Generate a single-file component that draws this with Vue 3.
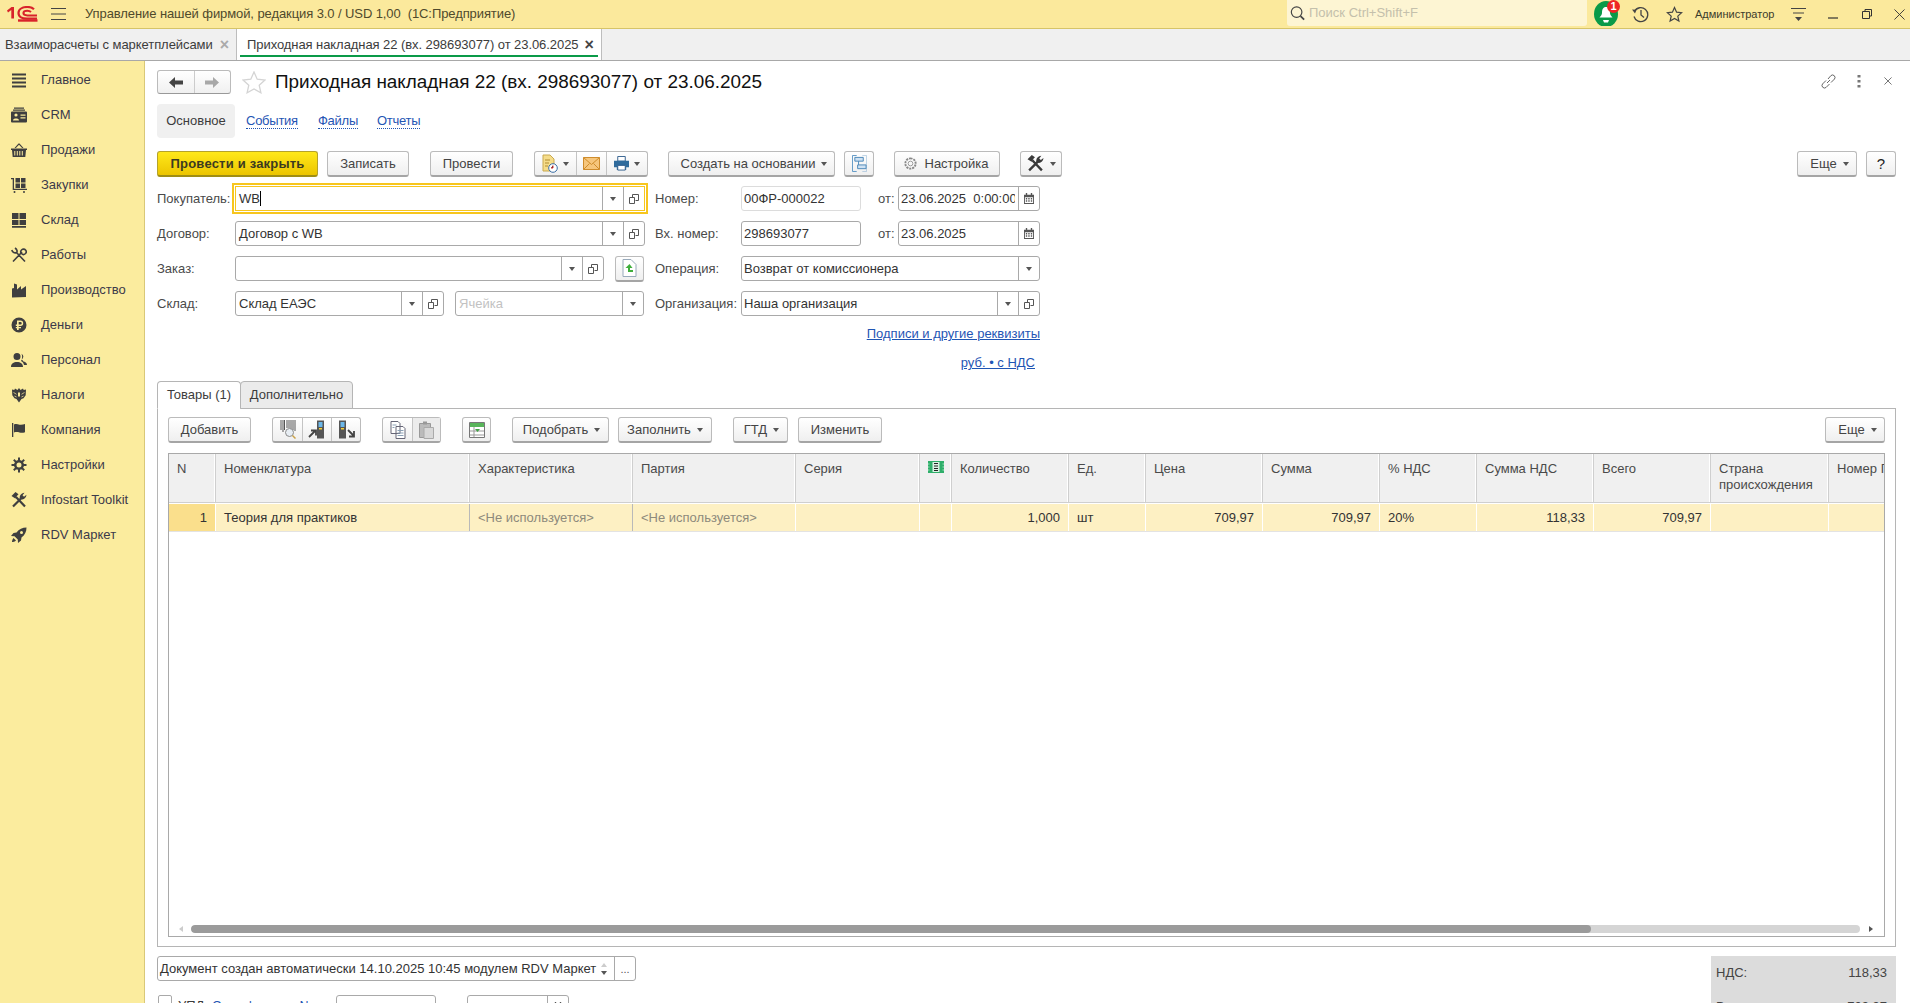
<script setup>
const nav = [
  { t: 'Главное', d: 'M1 1.5h14v2H1zM1 5.5h14v2H1zM1 9.5h14v2H1zM1 13.5h14v2H1z' },
  { t: 'CRM', d: 'M3 .5h10v1.2H3zM2 2.5h12v1.2H2zM1 4.5h14a1 1 0 011 1v9a1 1 0 01-1 1H1a1 1 0 01-1-1v-9a1 1 0 011-1zM3.4 8a1.6 1.6 0 103.2 0 1.6 1.6 0 10-3.2 0zM2 13.5h6c0-2.6-6-2.6-6 0zM9.5 7.500h5v1.200h-5zM9.500 10.300h5v1.200h-5z' },
  { t: 'Продажи', d: 'M3.500 6L7.500 1.500h1L12.500 6h-1.400L8 2.700 4.900 6zM0 6.500h16V8h-1l-.7 7H1.700L1 8H0zM3.300 9v4.500h1V9zM5.800 9v4.500h1V9zM8.300 9v4.500h1V9zM10.800 9v4.500h1V9z' },
  { t: 'Закупки', d: 'M0 1h3v10.700h13V13H1.700V2.300H0zM4.500 1h4.500v4.500H4.500zM10 1h4.500v4.500H10zM4.500 6.500h4.500V11H4.500zM10 6.500h4.500V11H10zM2.500 15a1 1 0 102 0 1 1 0 10-2 0zM12 15a1 1 0 102 0 1 1 0 10-2 0z' },
  { t: 'Склад', d: 'M1 1h6.500v6H1zM8.500 1H15v6H8.500zM1 8h6.500v5H1zM8.500 8H15v5H8.500zM1 14h14v1.700H1z' },
  { t: 'Работы', s: 'M5.500 5.500l8.500 9M11 5L2 14.500M.8 3c.6 2.500 3 3.500 4.700 2.500 1.200-1 .6-3-1.500-4.500M10.500 6.500a2.300 2.300 0 104-3.500 2.300 2.300 0 10-4 3.500', w: 1.6 },
  { t: 'Производство', d: 'M1 15.500V6.500l2-.5V1.500l3 1v5l4-3.500v3.500l5-3.500v11z' },
  { t: 'Деньги', d: 'M.500 8a7.500 7.500 0 1015 0 7.500 7.500 0 10-15 0zM6 3.500h3.500a2.700 2.700 0 010 5.400H7.700v1H10v1.300H7.700v1.800H6v-1.800H4.800V9.900H6v-1H4.800V7.600H6zM7.700 4.900v2.700h1.700a1.350 1.350 0 000-2.700z' },
  { t: 'Персонал', d: 'M2.500 4.500a3.500 3.500 0 107 0 3.500 3.500 0 10-7 0zM0 15c0-3.500 2.500-5 6-5s6 1.500 6 5zM10.500 1.700a3.200 3.200 0 010 5.800c2 .8 1 1.500 1.500 1.800 2 .5 4 1.500 4 3.700h-3c-.3-1.800-1.500-3.200-3-4 1.200-2 1.600-5 .5-7.300z' },
  { t: 'Налоги', d: 'M8 1l1.500 2L12 1.500l.7 1.500 2.300-.5-.3 5.700-2.200 3-2 .8L8 15.500 5.500 12l-2-.8-2.200-3L1 2.500l2.300.5.700-1.500L6.500 3zM7 5.500v4h2v-4zM2.500 5v.8l3 2v-.8zM13.500 5v.8l-3 2v-.8zM3.500 8.500v.8l2 1.200v-.8zM12.500 8.500v.8l-2 1.200v-.8z' },
  { t: 'Компания', d: 'M1 1h1.300v14H1zM3 2.500c2-1 3.800-.2 5.500.2 2 .4 3.800-.1 5.500-.6v8.200c-2 .6-3.800.7-5.500.2-1.800-.5-3.500-.7-5.500 0z' },
  { t: 'Настройки', d: 'M8 3a5 5 0 110 10 5 5 0 010-10zM8 5.500a2.500 2.500 0 100 5 2.500 2.500 0 000-5zM7 .500h2v3H7zM7 12.500h2v3H7zM.500 7h3v2h-3zM12.500 7h3v2h-3zM2.100 3.500l1.400-1.400 2.100 2.100-1.400 1.400zM12.500 2.100l1.400 1.400-2.100 2.100-1.400-1.400zM13.900 12.500l-1.400 1.400-2.100-2.100 1.400-1.400zM3.500 13.900l-1.400-1.400 2.100-2.100 1.400 1.400z' },
  { t: 'Infostart Toolkit', d: 'M.5 4L4.500 0l3 2.200-1.200 1.200-2 3zM9 6.800C8 4.500 9.800 1 13.500.800l-2 2.500L13 4.800l2.500-2c-.2 3-2.800 5.200-5 4.500z', s: 'M2 14.500L10.500 6M14 14.500L5 5', w: 2.2 },
  { t: 'RDV Маркет', d: 'M15.500.500c-4 0-7.500 1.500-10 5l-3 .5L0 9l3.500.200 3.300 3.300.2 3.500 3-2.500.5-3c3.500-2.500 5-6 5-10zM9 5.500a1.500 1.500 0 103 0 1.500 1.500 0 10-3 0zM2.500 11c-1 1-1.500 3-1.500 4 1 0 3-.5 4-1.500z' }
]

const cols = [
  { t: 'N', w: 47 }, { t: 'Номенклатура', w: 254 }, { t: 'Характеристика', w: 163 },
  { t: 'Партия', w: 163 }, { t: 'Серия', w: 124 }, { t: '', w: 32, stamp: true },
  { t: 'Количество', w: 117 }, { t: 'Ед.', w: 77 }, { t: 'Цена', w: 117 },
  { t: 'Сумма', w: 117 }, { t: '% НДС', w: 97 }, { t: 'Сумма НДС', w: 117 },
  { t: 'Всего', w: 117 }, { t: 'Страна происхождения', w: 118, narrow: true }, { t: 'Номер ГТД', w: 90 }
]
const gridCols = cols.map(c => c.w + 'px').join(' ')
const row = [
  { t: '1', r: true, n: true }, { t: 'Теория для практиков', sep: true }, { t: '<Не используется>', g: true, sep: true },
  { t: '<Не используется>', g: true }, { t: '' }, { t: '' },
  { t: '1,000', r: true }, { t: 'шт' }, { t: '709,97', r: true },
  { t: '709,97', r: true }, { t: '20%' }, { t: '118,33', r: true },
  { t: '709,97', r: true }, { t: '' }, { t: '' }
]
</script>

<template>
  <div class="app">
    <svg class="sprite" width="0" height="0">
      <symbol id="i-open" viewBox="0 0 10 10">
        <path d="M3.500 3.500V.5h6v6h-3M.5 3.500h5v6h-5z" fill="none" stroke="#555" stroke-width="1" />
      </symbol>
      <symbol id="i-cal" viewBox="0 0 11 12">
        <path d="M0 2h2V0h1.500v2h4V0H9v2h2v10H0zM1 4.500V11h9V4.500z" fill="#555" fill-rule="evenodd" />
        <path d="M2 5.500h1.500V7H2zM4.700 5.500h1.500V7H4.700zM7.500 5.500H9V7H7.500zM2 8h1.500v1.500H2zM4.700 8h1.500v1.500H4.700zM7.500 8H9v1.500H7.500z" fill="#555" />
      </symbol>
      <symbol id="i-tools" viewBox="0 0 16 16">
        <path d="M.5 4L4.500 0l3 2.200-1.200 1.200-2 3zM9 6.800C8 4.500 9.800 1 13.500.8l-2 2.500L13 4.800l2.500-2c-.2 3-2.800 5.200-5 4.500z" fill="#3a3a3a" />
        <path d="M2 14.500L10.500 6M14 14.500L5 5" fill="none" stroke="#3a3a3a" stroke-width="2.200" />
      </symbol>
    </svg>

    <header class="topbar">
      <svg class="logo" width="31" height="16" viewBox="0 0 31 16">
        <path d="M0 4.500L4.500 1H7v11.500H4.300V4L1 6.500z" fill="#d8232a" />
        <path d="M27 3.200C25.500 1.800 23 1 20.500 1c-5 0-9 2.200-9 6s3.800 5.700 8.500 5.700H30" fill="none" stroke="#d8232a" stroke-width="2.200" />
        <path d="M24 6c-1-.9-2.300-1.300-3.600-1.300-2.200 0-4 .9-4 2.400s1.800 2.300 4 2.300H30" fill="none" stroke="#d8232a" stroke-width="2" />
        <path d="M11 14.500h19.500" stroke="#d8232a" stroke-width="2.400" />
      </svg>
      <svg class="burger" width="15" height="12" viewBox="0 0 15 12"><path d="M0 .5h15M0 6h15M0 11.500h15" stroke="#444" /></svg>
      <span class="apptitle">Управление нашей фирмой, редакция 3.0 / USD 1,00&nbsp; (1С:Предприятие)</span>
      <div class="search">
        <svg width="15" height="16" viewBox="0 0 17 17"><circle cx="7.500" cy="7.500" r="6" fill="none" stroke="#444" stroke-width="1.300" /><path d="M12 12l4 4" stroke="#444" stroke-width="2" /></svg>
        <span>Поиск Ctrl+Shift+F</span>
      </div>
      <div class="bell">
        <svg width="24" height="25" viewBox="0 0 24 25">
          <ellipse cx="12" cy="13" rx="12" ry="13" fill="#0a9a48" />
          <path d="M12 6c3 0 4 2.500 4 6 0 2 1.500 3 2.500 4.500h-13C6.500 15 8 14 8 12c0-3.500 1-6 4-6z" fill="#fff" />
          <path d="M9 19h6l-1 2.500h-4z" fill="#fff" />
        </svg>
        <span class="badge">1</span>
      </div>
      <svg class="hist" width="17" height="17" viewBox="0 0 17 17">
        <path d="M2.500 5.500A7 7 0 112 10.500" fill="none" stroke="#444" stroke-width="1.300" />
        <path d="M0 3.500l4.500.2L3 7.500z" fill="#444" />
        <path d="M9 4v5l3 2.500" fill="none" stroke="#444" stroke-width="1.300" />
      </svg>
      <svg class="star-top" width="17" height="17" viewBox="0 0 17 17"><path d="M8.500 1.500l2.100 4.700 5 .5-3.800 3.400 1.100 5-4.400-2.600-4.400 2.600 1.100-5L1.400 6.700l5-.5z" fill="none" stroke="#444" stroke-width="1.200" /></svg>
      <span class="user">Администратор</span>
      <svg class="menu-i" width="15" height="15" viewBox="0 0 15 15"><path d="M0 1.500h15M2 6h11" stroke="#444" /><path d="M4 10h7l-3.500 4z" fill="#444" /></svg>
      <svg class="win-min" width="10" height="10" viewBox="0 0 10 10"><path d="M0 9h10" stroke="#333" stroke-width="1.200" /></svg>
      <svg class="win-res" width="10" height="10" viewBox="0 0 10 10"><path d="M3 2V.5h6.500V7H8M.5 2.500h7v7h-7z" fill="none" stroke="#333" /></svg>
      <svg class="win-cls" width="11" height="11" viewBox="0 0 12 12"><path d="M.5.500l11 11M11.500.500l-11 11" stroke="#333" /></svg>
    </header>

    <nav class="tabbar">
      <div class="wtab"><span>Взаиморасчеты с маркетплейсами</span><i class="x x-g">×</i></div>
      <div class="wtab active"><span>Приходная накладная 22 (вх. 298693077) от 23.06.2025</span><i class="x">×</i></div>
    </nav>

    <div class="main">
      <aside class="side">
        <a v-for="n in nav" :key="n.t" class="side-item">
          <svg width="16" height="16" viewBox="0 0 16 16">
            <path v-if="n.d" :d="n.d" fill="#3f3f3f" :fill-rule="n.t === 'Настройки' || n.t === 'Infostart Toolkit' ? 'nonzero' : 'evenodd'" />
            <path v-if="n.s" :d="n.s" fill="none" stroke="#3f3f3f" :stroke-width="n.w" />
          </svg>
          <span>{{ n.t }}</span>
        </a>
      </aside>

      <section class="content">
        <div class="head">
          <div class="navbtns">
            <button class="nb"><svg width="14" height="11" viewBox="0 0 14 11"><path d="M0 5.500L6 0v3.500h8v4H6V11z" fill="#444" /></svg></button>
            <button class="nb"><svg width="14" height="11" viewBox="0 0 14 11"><path d="M14 5.500L8 0v3.500H0v4h8V11z" fill="#a8a8a8" /></svg></button>
          </div>
          <svg class="fav" width="24" height="23" viewBox="0 0 24 23"><path d="M12 1l3.200 7.200 7.800.8-5.800 5.200 1.700 7.600L12 18l-6.900 3.800 1.700-7.600L1 9l7.800-.8z" fill="none" stroke="#d4d4d4" stroke-width="1.300" /></svg>
          <h1 class="title">Приходная накладная 22 (вх. 298693077) от 23.06.2025</h1>
          <div class="head-tools">
            <svg width="17" height="17" viewBox="0 0 17 17"><path d="M7 10l3-3M6 7.500l-3.500 3.500a2.500 2.500 0 003.500 3.500L9.500 11M8 6l3-3.500A2.500 2.500 0 0114.500 6L11 9.500" fill="none" stroke="#666" stroke-width="1" /></svg>
            <svg class="dots3" width="4" height="15" viewBox="0 0 4 15"><path d="M.5 1h3v2.500h-3zM.5 6h3v2.500h-3zM.5 11h3v2.500h-3z" fill="#777" /></svg>
            <svg class="hclose" width="8" height="8" viewBox="0 0 9 9"><path d="M.5.500l8 8M8.500.500l-8 8" stroke="#666" /></svg>
          </div>
        </div>

        <div class="subnav">
          <span class="sn-on">Основное</span>
          <a class="sn">События</a>
          <a class="sn sn2">Файлы</a>
          <a class="sn sn3">Отчеты</a>
        </div>

        <div class="toolbar">
          <button class="btn primary w161">Провести и закрыть</button>
          <button class="btn w82 g9">Записать</button>
          <button class="btn w83 g21">Провести</button>
          <div class="grp g21">
            <button class="seg w41">
              <svg width="16" height="19" viewBox="0 0 16 19"><path d="M1 1h7l4 4v12H1z" fill="#f5dc8a" stroke="#c9a94e" /><path d="M3 6h5M3 9h4M3 12h3" stroke="#b08c30" /><circle cx="11" cy="14" r="4.300" fill="#fff" stroke="#3a6ea5" /><path d="M11 11.500V14h-2" stroke="#d33" /></svg>
              <b class="tri"></b>
            </button>
            <button class="seg w30">
              <svg width="17" height="13" viewBox="0 0 17 13"><path d="M.5.500h16v12H.5z" fill="#f6c67c" stroke="#cf8c2c" /><path d="M.5.500l8 7 8-7M.5 12.500l6-6M16.500 12.500l-6-6" fill="none" stroke="#cf8c2c" /></svg>
            </button>
            <button class="seg w41">
              <svg width="15" height="15" viewBox="0 0 16 16"><path d="M4 .5h8v5H4z" fill="#fff" stroke="#2f5d8c" /><path d="M0 5h16v7h-3v3H3v-3H0z" fill="#2f6b9c" /><path d="M4 10h8v5H4z" fill="#fff" stroke="#2f5d8c" /></svg>
              <b class="tri"></b>
            </button>
          </div>
          <button class="btn w167 g20 pad4">Создать на основании <b class="tri tl"></b></button>
          <button class="btn w30 g9 icon">
            <svg width="15" height="17" viewBox="0 0 16 18"><path d="M5 .5H.5v17H5" fill="none" stroke="#5a94c4" /><path d="M11 .5h4.500v17H11" fill="none" stroke="#5a94c4" opacity=".4" /><path d="M3 2.500h9v4H3zM6 10.500h9v4H6z" fill="#cfe2f3" stroke="#4a86b8" /><path d="M7 6.500v4" stroke="#4a86b8" /></svg>
          </button>
          <button class="btn w106 g20 padr3">
            <svg width="15" height="15" viewBox="0 0 16 16"><path d="M8 2.500a5.500 5.500 0 110 11 5.500 5.500 0 010-11z" fill="none" stroke="#888" stroke-width="2" stroke-dasharray="2.200 1" /><circle cx="8" cy="8" r="2.500" fill="none" stroke="#999" /></svg>
            <span class="setlbl">Настройка</span>
          </button>
          <button class="btn w42 g20">
            <svg width="17" height="17"><use href="#i-tools" /></svg>
            <b class="tri tl"></b>
          </button>
          <button class="btn w60 auto pad4">Еще <b class="tri tl"></b></button>
          <button class="btn w30 g9 qm">?</button>
        </div>

        <div class="form">
          <div class="col-l">
            <div class="frow">
              <label class="lbl-l">Покупатель:</label>
              <div class="fld focus w410"><span class="val">WB<i class="caret"></i></span><span class="fb"><b class="tri"></b></span><span class="fb"><svg width="10" height="10"><use href="#i-open" /></svg></span></div>
            </div>
            <div class="frow">
              <label class="lbl-l">Договор:</label>
              <div class="fld w410"><span class="val">Договор с WB</span><span class="fb"><b class="tri"></b></span><span class="fb"><svg width="10" height="10"><use href="#i-open" /></svg></span></div>
            </div>
            <div class="frow">
              <label class="lbl-l">Заказ:</label>
              <div class="fld w369"><span class="val"></span><span class="fb"><b class="tri"></b></span><span class="fb"><svg width="10" height="10"><use href="#i-open" /></svg></span></div>
              <button class="btn w29 small-icon">
                <svg width="15" height="18" viewBox="0 0 15 18"><path d="M1 .5h8l5 5v12H1z" fill="#fff" stroke="#9ab" /><path d="M7.500 5L3.500 9h2.500v4h5V11H8V9h2.500z" fill="#3fae3c" /></svg>
              </button>
            </div>
            <div class="frow">
              <label class="lbl-l">Склад:</label>
              <div class="fld w209"><span class="val">Склад ЕАЭС</span><span class="fb"><b class="tri"></b></span><span class="fb"><svg width="10" height="10"><use href="#i-open" /></svg></span></div>
              <div class="fld w189"><span class="val ph">Ячейка</span><span class="fb"><b class="tri"></b></span></div>
            </div>
          </div>

          <div class="col-r">
            <div class="frow">
              <label class="lbl-r">Номер:</label>
              <div class="fld w120 ro"><span class="val">00ФР-000022</span></div>
              <label class="lbl-ot">от:</label>
              <div class="fld w142"><span class="val clip">23.06.2025&nbsp; 0:00:00</span><span class="fb"><svg width="10" height="11"><use href="#i-cal" /></svg></span></div>
            </div>
            <div class="frow">
              <label class="lbl-r">Вх. номер:</label>
              <div class="fld w120"><span class="val">298693077</span></div>
              <label class="lbl-ot">от:</label>
              <div class="fld w142"><span class="val">23.06.2025</span><span class="fb"><svg width="10" height="11"><use href="#i-cal" /></svg></span></div>
            </div>
            <div class="frow">
              <label class="lbl-r">Операция:</label>
              <div class="fld w299"><span class="val">Возврат от комиссионера</span><span class="fb"><b class="tri"></b></span></div>
            </div>
            <div class="frow">
              <label class="lbl-r">Организация:</label>
              <div class="fld w299"><span class="val">Наша организация</span><span class="fb"><b class="tri"></b></span><span class="fb"><svg width="10" height="10"><use href="#i-open" /></svg></span></div>
            </div>
            <a class="hl hl1">Подписи и другие реквизиты</a>
            <a class="hl hl2">руб. • с НДС</a>
          </div>
        </div>

        <div class="ptabs">
          <span class="ptab on">Товары (1)</span>
          <span class="ptab">Дополнительно</span>
        </div>
        <div class="panel">
          <div class="toolbar t2">
            <button class="btn w83">Добавить</button>
            <div class="grp g21">
              <button class="seg w29">
                <svg width="16" height="19" viewBox="0 0 16 19"><path d="M1 0v10M3 0v12M4.500 0v10M7 0v8M9 0v8M11 0v9M13 0v10M15 0v11" stroke="#555" /><circle cx="9.500" cy="12.500" r="4" fill="#e8eef4" stroke="#8a8a8a" /><path d="M12.500 15.500l3 3" stroke="#c9a24a" stroke-width="1.500" /></svg>
              </button>
              <button class="seg w29">
                <svg width="18" height="19" viewBox="0 0 18 19"><path d="M9 .5h7v18H9z" fill="#555" /><path d="M10.500 2h4v5h-4z" fill="#6bb7e8" /><path d="M11 8h3v1.500h-3z" fill="#f4d23a" /><path d="M1 17l6-6M3 10.500h5v5" fill="none" stroke="#444" stroke-width="1.800" /></svg>
              </button>
              <button class="seg w29">
                <svg width="18" height="19" viewBox="0 0 18 19"><path d="M2 .5h7v18H2z" fill="#555" /><path d="M3.500 2h4v5h-4z" fill="#6bb7e8" /><path d="M4 8h3v1.500H4z" fill="#f4d23a" /><path d="M11 10l6 6M17 11v5.500h-5" fill="none" stroke="#444" stroke-width="1.800" /></svg>
              </button>
            </div>
            <div class="grp g21">
              <button class="seg w29">
                <svg width="16" height="18" viewBox="0 0 16 18"><path d="M1 .5h7l2 2v10H1zM6 5.500h7l2 2v10H6z" fill="#fff" stroke="#667" /><path d="M2.500 4h4M2.500 6.500h2M7.500 9.500h6M7.500 12h6M7.500 14.500h6" stroke="#8aa0b5" /></svg>
              </button>
              <button class="seg w28 dim">
                <svg width="15" height="18" viewBox="0 0 15 18"><path d="M.5 2.500h11v14H.5z" fill="#bbb" stroke="#999" /><path d="M4 .5h4v3H4z" fill="#999" /><path d="M5 6.500h9.500v11H5z" fill="#d8d8d8" stroke="#aaa" /></svg>
              </button>
            </div>
            <button class="btn w29 g21 icon">
              <svg width="16" height="16" viewBox="0 0 16 16"><path d="M.5.500h15v15H.5z" fill="#fff" stroke="#777" /><path d="M1 1h14v4H1z" fill="#58b45a" /><path d="M1 9h14M1 13h14M5 5v10" stroke="#999" /><path d="M6 7h5l-2.500 3z" fill="#3fa143" /></svg>
            </button>
            <button class="btn w97 g21 pad2">Подобрать <b class="tri tl"></b></button>
            <button class="btn w94 g9">Заполнить <b class="tri tl"></b></button>
            <button class="btn w55 g21 pad2">ГТД <b class="tri tl"></b></button>
            <button class="btn w84 g10">Изменить</button>
            <button class="btn w60 auto pad4">Еще <b class="tri tl"></b></button>
          </div>

          <div class="grid">
            <div class="g-head" :style="{ gridTemplateColumns: gridCols }">
              <div v-for="c in cols" :key="c.t + c.w" class="hc" :class="{ narrow: c.narrow }">
                <svg v-if="c.stamp" width="16" height="12" viewBox="0 0 16 12"><path d="M0 0h16v12H0z" fill="#2fae6a" /><path d="M4.500 1h7v10h-7z" fill="#d9f2e3" /><path d="M6 2.500h4M6 5h4M6 7.500h4M6 9.500h4" stroke="#222" /><path d="M0 3h1.500M0 6h1.500M0 9h1.500M14.500 3H16M14.500 6H16M14.500 9H16" stroke="#9fe3bd" /></svg>
                <template v-else>{{ c.t }}</template>
              </div>
            </div>
            <div class="g-row" :style="{ gridTemplateColumns: gridCols }">
              <div v-for="(c, i) in row" :key="i" class="rc" :class="{ r: c.r, n: c.n, g: c.g, sep: c.sep }">{{ c.t }}</div>
            </div>
            <div class="g-fill"></div>
            <div class="hscroll">
              <b class="arr al"></b>
              <div class="track"><div class="thumb"></div></div>
              <b class="arr ar"></b>
            </div>
          </div>
        </div>

        <div class="foot">
          <div class="foot-l">
            <div class="fld w479 memo">
              <span class="val memo-t">Документ создан автоматически 14.10.2025 10:45 модулем RDV Маркет</span>
              <span class="spin"><b class="up"></b><b class="dn"></b></span>
              <span class="fb dots">...</span>
            </div>
            <div class="low">
              <span class="cb"></span>
              <span class="upd">УПД</span>
              <a class="updl">Счет-фактура №:</a>
              <div class="fld w100"></div>
              <span class="lbl-ot2">от:</span>
              <div class="fld w102"><span class="val"></span><span class="fb"><svg width="10" height="11"><use href="#i-cal" /></svg></span></div>
            </div>
          </div>
          <div class="totals">
            <div class="tr"><span>НДС:</span><span class="tv">118,33</span></div>
            <div class="tr"><span>Всего:</span><span class="tv">709,97</span></div>
          </div>
        </div>
      </section>
    </div>
  </div>
</template>

<style>
html, body { margin: 0; padding: 0; overflow: hidden; background: #fff; }
</style>

<style scoped>
.app { width: 1910px; height: 1003px; overflow: hidden; display: flex; flex-direction: column; font: 13px/16px "Liberation Sans", Arial, sans-serif; color: #3c3c3c; background: #fff; }
.sprite { display: none; }
button { font: inherit; color: inherit; padding: 0; margin: 0; cursor: default; }

.topbar { height: 28px; flex: none; display: flex; align-items: center; background: #fbe99c; border-bottom: 1px solid #d6c468; }
.logo { margin-left: 7px; }
.burger { margin-left: 13px; }
.apptitle { margin-left: 19px; color: #4f4a2c; width: 1202px; white-space: nowrap; letter-spacing: -0.09px; }
.search { width: 300px; height: 26px; margin-top: -2px; background: #fdf5d3; border-radius: 0 0 3px 3px; display: flex; align-items: center; color: #c4c0ac; padding-left: 3px; box-sizing: border-box; gap: 4px; }
.bell { margin-left: 7px; width: 24px; height: 25px; position: relative; margin-top: -2px; }
.bell svg { display: block; }
.badge { position: absolute; right: -2px; top: -1px; width: 13px; height: 13px; border-radius: 50%; background: #ee2424; color: #fff; font-size: 11px; font-weight: bold; line-height: 13px; text-align: center; }
.hist { margin-left: 14px; }
.star-top { margin-left: 17px; }
.user { margin-left: 12px; font-size: 11px; color: #3c3c2c; width: 82px; white-space: nowrap; }
.menu-i { margin-left: 14px; }
.win-min { margin-left: 22px; }
.win-res { margin-left: 24px; }
.win-cls { margin-left: 22px; }

.tabbar { height: 32px; flex: none; box-sizing: border-box; display: flex; background: #f0f0f0; border-bottom: 1px solid #a8a8a8; }
.wtab { display: flex; align-items: center; height: 31px; box-sizing: border-box; border-right: 1px solid #bdbdbd; white-space: nowrap; letter-spacing: -0.07px; }
.wtab:first-child { width: 237px; padding-left: 5px; }
.wtab.active { width: 365px; background: #fff; padding-left: 10px; position: relative; }
.wtab.active::after { content: ""; position: absolute; left: 3px; right: 3px; bottom: 3px; height: 2px; background: #0a9a48; }
.x { font-style: normal; font-weight: bold; font-size: 16px; margin-left: 6px; color: #444; }
.x-g { color: #aaa; margin-left: 7px; }

.main { flex: 1; display: flex; min-height: 0; }
.side { width: 145px; flex: none; box-sizing: border-box; background: #fbec9e; border-right: 1px solid #d9c878; padding-top: 1px; }
.side-item { height: 35px; display: flex; align-items: center; padding-left: 11px; gap: 14px; color: #3b3a4a; white-space: nowrap; }

.content { flex: 1; min-width: 0; padding: 8px 14px 0 12px; display: flex; flex-direction: column; overflow: hidden; }
.head { height: 26px; display: flex; align-items: center; flex: none; }
.navbtns { display: flex; width: 74px; height: 24px; box-sizing: border-box; border: 1px solid #bbb; border-bottom-color: #999; border-radius: 3px; background: linear-gradient(#fff, #f0f0f0); }
.nb { flex: 1; border: 0; background: none; display: flex; align-items: center; justify-content: center; }
.nb + .nb { border-left: 1px solid #ccc; }
.fav { margin-left: 11px; }
.title { margin: -1px 0 0 9px; font-size: 18.9px; font-weight: normal; color: #111; white-space: nowrap; line-height: 24px; }
.head-tools { margin-left: auto; display: flex; align-items: center; padding-right: 4px; margin-top: -2px; }
.dots3 { margin-left: 20px; }
.hclose { margin-left: 23px; }

.subnav { margin-top: 9px; height: 34px; display: flex; align-items: center; flex: none; }
.sn-on { width: 78px; height: 34px; line-height: 34px; text-align: center; background: #f0f0f0; border-radius: 4px; }
.sn { color: #1f55b4; border-bottom: 1px dotted #1f55b4; line-height: 14px; margin-left: 11px; letter-spacing: -0.25px; }
.sn2 { margin-left: 20px; }
.sn3 { margin-left: 19px; }

.toolbar { display: flex; align-items: center; margin-top: 13px; height: 26px; flex: none; }
.t2 { margin-top: 0; }
.btn { height: 26px; box-sizing: border-box; border: 1px solid #bbb; border-bottom: 2px solid #a5a5a5; border-radius: 3px; background: linear-gradient(#fff, #efefef); display: inline-flex; align-items: center; justify-content: center; white-space: nowrap; flex: none; color: #444; }
.primary { background: linear-gradient(#ffe81a, #ecc500); border-color: #b5a32a; border-bottom-color: #9f8e14; font-weight: bold; color: #3c3a20; letter-spacing: 0.2px; }
.pad2 { padding-left: 2px; }
.pad4 { padding-left: 5px; }
.padr3 { padding-right: 3px; }
.tri { display: inline-block; width: 0; height: 0; border-left: 3.5px solid transparent; border-right: 3.5px solid transparent; border-top: 4px solid #555; }
.tl { margin-left: 6px; }
.qm { font-size: 15px; color: #222; }
.setlbl { margin-left: 7px; }
.grp { display: flex; height: 26px; box-sizing: border-box; border: 1px solid #bbb; border-bottom: 2px solid #a5a5a5; border-radius: 3px; background: linear-gradient(#fff, #efefef); flex: none; }
.seg { border: 0; background: none; display: flex; align-items: center; justify-content: center; gap: 5px; box-sizing: border-box; height: 100%; flex: none; }
.seg + .seg { border-left: 1px solid #c4c4c4; }
.dim { background: #ececec; }
.g9 { margin-left: 9px; }
.g10 { margin-left: 10px; }
.g20 { margin-left: 20px; }
.g21 { margin-left: 21px; }
.auto { margin-left: auto; }
.w28 { width: 28px; } .w29 { width: 29px; } .w30 { width: 30px; } .w41 { width: 41px; } .w42 { width: 42px; } .w55 { width: 55px; } .w60 { width: 60px; }
.w82 { width: 82px; } .w83 { width: 83px; } .w84 { width: 84px; } .w94 { width: 94px; } .w97 { width: 97px; }
.w106 { width: 106px; } .w161 { width: 161px; } .w167 { width: 167px; }

.form { display: flex; margin-top: 9px; flex: none; }
.col-l { width: 498px; flex: none; display: flex; flex-direction: column; gap: 10px; }
.col-r { width: 385px; flex: none; display: flex; flex-direction: column; gap: 10px; }
.col-r .val { padding-left: 2px; }
.frow { display: flex; align-items: center; height: 25px; }
.lbl-l { width: 78px; flex: none; white-space: nowrap; color: #4a4a4a; }
.lbl-r { width: 86px; flex: none; white-space: nowrap; color: #4a4a4a; }
.lbl-ot { width: 20px; margin-left: 17px; flex: none; color: #4a4a4a; }
.fld { height: 25px; box-sizing: border-box; border: 1px solid #a9a9a9; border-radius: 3px; background: #fff; display: flex; align-items: center; flex: none; }
.focus { outline: 2px solid #f7c61e; outline-offset: 1px; border-color: #f7c61e; border-radius: 0; }
.ro { border-color: #dcdcdc; }
.val { flex: 1; min-width: 0; padding-left: 3px; white-space: nowrap; overflow: hidden; color: #333; }
.clip { margin-right: 3px; }
.ph { color: #c2c2c2; }
.caret { display: inline-block; width: 1px; height: 15px; background: #000; vertical-align: -3px; }
.fb { width: 21px; height: 100%; flex: none; box-sizing: border-box; border-left: 1px solid #a9a9a9; display: flex; align-items: center; justify-content: center; }
.w100 { width: 100px; } .w102 { width: 102px; } .w120 { width: 120px; } .w142 { width: 142px; } .w189 { width: 189px; margin-left: 11px; }
.w209 { width: 209px; } .w299 { width: 299px; } .w369 { width: 369px; } .w410 { width: 410px; } .w479 { width: 479px; }
.small-icon { margin-left: 11px; }
.hl { color: #1f55b4; text-decoration: underline; align-self: flex-end; line-height: 18px; }
.hl1 { margin-top: -1px; }
.hl2 { margin-top: 1px; margin-right: 5px; }

.ptabs { display: flex; margin-top: 9px; height: 27px; flex: none; position: relative; z-index: 1; }
.ptab { box-sizing: border-box; height: 28px; line-height: 25px; border: 1px solid #b5b5b5; border-radius: 4px 4px 0 0; background: #ebebeb; width: 113px; text-align: center; margin-left: -1px; white-space: nowrap; }
.ptab.on { background: #fff; border-bottom-color: #fff; width: 84px; margin-left: 0; color: #3c3c3c; }
.panel { height: 539px; flex: none; box-sizing: border-box; border: 1px solid #b5b5b5; padding: 8px 10px 9px 10px; display: flex; flex-direction: column; }
.grid { flex: 1; margin-top: 10px; border: 1px solid #a9a9a9; display: flex; flex-direction: column; overflow: hidden; min-height: 0; }
.g-head, .g-row { display: grid; flex: none; }
.hc { height: 49px; box-sizing: border-box; background: #f0f0f0; border-right: 1px solid #cfcfcf; border-bottom: 1px solid #cfcfcf; padding: 7px 7px 0 8px; color: #4a4a4a; line-height: 16px; box-shadow: inset -1px 0 0 #fff; overflow: hidden; white-space: nowrap; }
.hc.narrow { white-space: normal; }
.g-row { margin-top: 1px; border-bottom: 1px solid #e3e3e3; }
.rc { height: 27px; box-sizing: border-box; line-height: 27px; background: #fdf0c3; border-right: 1px solid #fff; padding: 0 8px; color: #333; white-space: nowrap; overflow: hidden; }
.rc.r { text-align: right; }
.rc.n { background: #fadf8c; }
.rc.g { color: #8d8a7c; }
.rc.sep { border-right-color: #b9b9b9; }
.g-fill { flex: 1; }
.hscroll { height: 8px; flex: none; margin-bottom: 3px; display: flex; align-items: center; }
.track { margin-left: 8px; width: 1669px; height: 8px; background: #d5d5d5; border-radius: 4px; overflow: hidden; }
.thumb { width: 1400px; height: 8px; border-radius: 4px; background: #9b9b9b; }
.arr { width: 0; height: 0; border-top: 3px solid transparent; border-bottom: 3px solid transparent; }
.al { margin-left: 10px; border-right: 4px solid #ccc; }
.ar { margin-left: 9px; border-left: 4px solid #555; }

.foot { margin-top: 9px; display: flex; justify-content: space-between; align-items: flex-start; flex: none; }
.foot-l { display: flex; flex-direction: column; }
.memo { height: 25px; }
.memo-t { padding-left: 2px; }
.spin { width: 12px; flex: none; display: flex; flex-direction: column; align-items: center; gap: 4px; margin-right: 4px; }
.up, .dn { width: 0; height: 0; border-left: 3px solid transparent; border-right: 3px solid transparent; }
.up { border-bottom: 4px solid #ccc; }
.dn { border-top: 4px solid #555; }
.dots { font-size: 11px; color: #555; }
.low { margin-top: 14px; display: flex; align-items: flex-start; height: 25px; }
.cb { width: 14px; height: 14px; box-sizing: border-box; border: 1px solid #a9a9a9; border-radius: 2px; margin-left: 1px; }
.upd { margin-left: 6px; margin-top: 3px; width: 26px; }
.updl { margin-left: 8px; margin-top: 3px; color: #1f55b4; white-space: nowrap; width: 124px; }
.lbl-ot2 { margin-left: 11px; width: 20px; margin-top: 3px; }
.totals { width: 185px; height: 60px; box-sizing: border-box; background: #dcdcdc; padding: 9px 9px 0 5px; display: flex; flex-direction: column; gap: 16px; }
.tr { display: flex; justify-content: space-between; height: 18px; color: #444; }
</style>
